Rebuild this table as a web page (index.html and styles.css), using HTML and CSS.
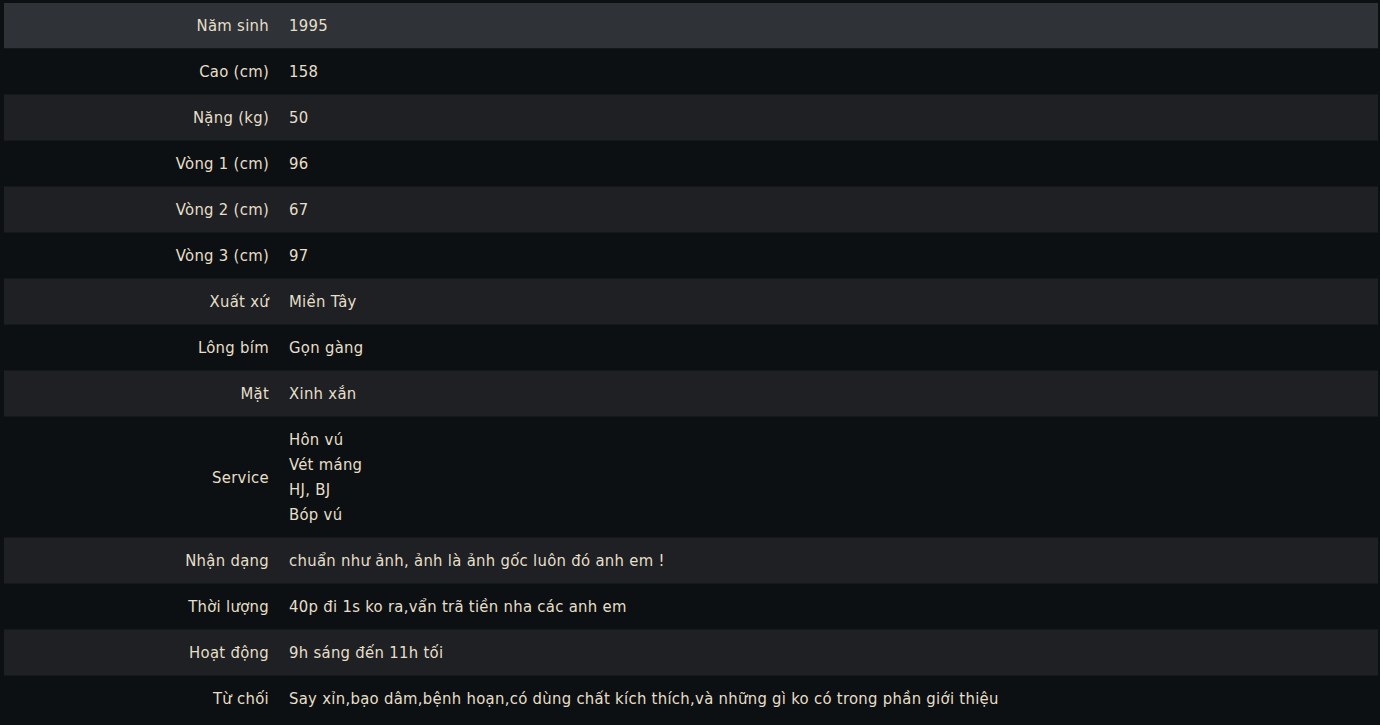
FILE: index.html
```html
<!DOCTYPE html>
<html lang="vi">
<head>
<meta charset="utf-8">
<link rel="stylesheet" href="styles.css">
</head>
<body>
<table class="info">
<tbody>
<tr class="hl"><th>Năm sinh</th><td>1995</td></tr>
<tr><th>Cao (cm)</th><td>158</td></tr>
<tr class="odd"><th>Nặng (kg)</th><td>50</td></tr>
<tr><th>Vòng 1 (cm)</th><td>96</td></tr>
<tr class="odd"><th>Vòng 2 (cm)</th><td>67</td></tr>
<tr><th>Vòng 3 (cm)</th><td>97</td></tr>
<tr class="odd"><th>Xuất xứ</th><td>Miền Tây</td></tr>
<tr><th>Lông bím</th><td>Gọn gàng</td></tr>
<tr class="odd"><th>Mặt</th><td>Xinh xắn</td></tr>
<tr><th>Service</th><td>Hôn vú<br>Vét máng<br>HJ, BJ<br>Bóp vú</td></tr>
<tr class="odd"><th>Nhận dạng</th><td>chuẩn như ảnh, ảnh là ảnh gốc luôn đó anh em !</td></tr>
<tr><th>Thời lượng</th><td>40p đi 1s ko ra,vẩn trã tiền nha các anh em</td></tr>
<tr class="odd"><th>Hoạt động</th><td>9h sáng đến 11h tối</td></tr>
<tr><th>Từ chối</th><td>Say xỉn,bạo dâm,bệnh hoạn,có dùng chất kích thích,và những gì ko có trong phần giới thiệu</td></tr>
</tbody>
</table>
</body>
</html>
```
FILE: styles.css
```css
html, body {
  margin: 0;
  background: #0d1013;
}
body {
  padding: 3px 2px 0 4px;
  font-family: "DejaVu Sans Condensed", "DejaVu Sans", sans-serif;
  font-size: 16.5px;
  letter-spacing: 0.3px;
  color: #e6dfc9;
}
.info {
  width: 100%;
  border-collapse: collapse;
}
.info th, .info td {
  padding: 10px 0;
  line-height: 25px;
  vertical-align: middle;
  border-top: 1px solid #16191c;
}
.info tr:first-child th, .info tr:first-child td {
  border-top: 0;
}
.info th {
  width: 265px;
  padding-right: 8px;
  text-align: right;
  font-weight: normal;
}
.info td {
  padding-left: 12px;
  text-align: left;
}
.info tr.hl {
  background: #2f3337;
}
.info tr.odd {
  background: #1e2024;
}
```
